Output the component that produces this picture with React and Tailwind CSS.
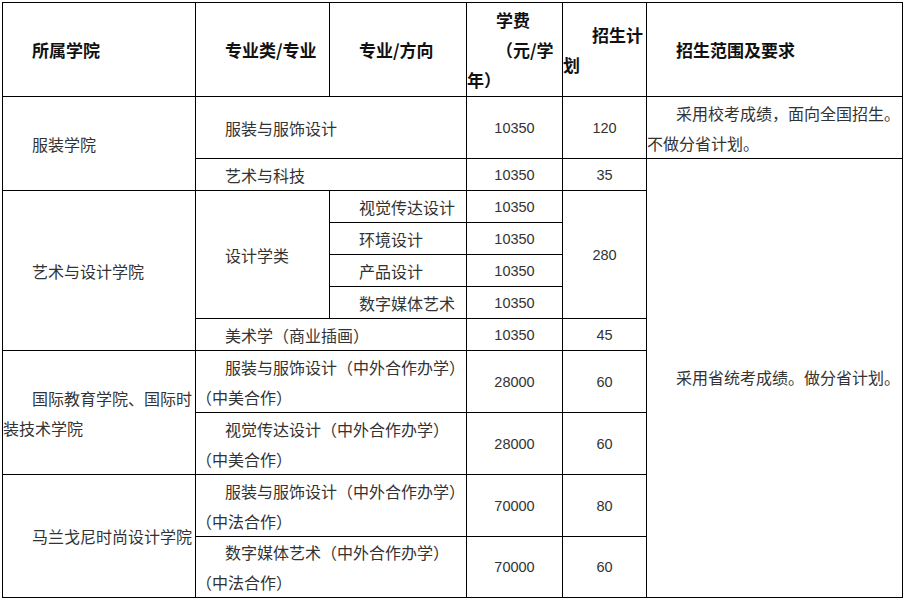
import React from 'react';

// rows of the admissions plan
const cjk = "font-['Noto_Sans_CJK_SC','Noto_Sans',sans-serif]";
const num = "font-['Liberation_Sans',Arial,sans-serif] text-[14.5px] text-center text-[#333]";

const Line = ({ indent = false, children }) => (
  <div className={indent ? 'pl-[29px] whitespace-nowrap' : 'whitespace-nowrap'}>{children}</div>
);

const Td = ({ children, className = '', ...rest }) => (
  <td {...rest} className={`border border-black align-middle p-0 ${className}`}>
    {children}
  </td>
);

const App = () => {
  return (
    <div className={`pl-[2px] pt-[2px] bg-white min-h-[600px] ${cjk}`}>
      <table className="border-collapse table-fixed w-[900px] text-[16px] leading-[30px] text-[#333]">
        <colgroup>
          <col className="w-[193px]" />
          <col className="w-[134px]" />
          <col className="w-[137px]" />
          <col className="w-[96px]" />
          <col className="w-[84px]" />
          <col className="w-[256px]" />
        </colgroup>
        <tbody>
          <tr className="h-[94px] font-bold text-[17px] text-[#111]">
            <Td><Line indent>所属学院</Line></Td>
            <Td><Line indent>专业类/专业</Line></Td>
            <Td><Line indent>专业/方向</Line></Td>
            <Td>
              <Line indent>学费</Line>
              <Line indent>（元/学</Line>
              <Line>年）</Line>
            </Td>
            <Td>
              <Line indent>招生计</Line>
              <Line>划</Line>
            </Td>
            <Td><Line indent>招生范围及要求</Line></Td>
          </tr>

          <tr className="h-[62px]">
            <Td rowSpan={2}><Line indent>服装学院</Line></Td>
            <Td colSpan={2}><Line indent>服装与服饰设计</Line></Td>
            <Td className={num}>10350</Td>
            <Td className={num}>120</Td>
            <Td>
              <Line indent>采用校考成绩，面向全国招生。</Line>
              <Line>不做分省计划。</Line>
            </Td>
          </tr>
          <tr className="h-[32px]">
            <Td colSpan={2}><Line indent>艺术与科技</Line></Td>
            <Td className={num}>10350</Td>
            <Td className={num}>35</Td>
            <Td rowSpan={10}>
              <div className="-mt-[2px]">
                <Line indent>采用省统考成绩。做分省计划。</Line>
              </div>
            </Td>
          </tr>

          <tr className="h-[32px]">
            <Td rowSpan={5}><Line indent>艺术与设计学院</Line></Td>
            <Td rowSpan={4}><Line indent>设计学类</Line></Td>
            <Td><Line indent>视觉传达设计</Line></Td>
            <Td className={num}>10350</Td>
            <Td rowSpan={4} className={num}>280</Td>
          </tr>
          <tr className="h-[32px]">
            <Td><Line indent>环境设计</Line></Td>
            <Td className={num}>10350</Td>
          </tr>
          <tr className="h-[32px]">
            <Td><Line indent>产品设计</Line></Td>
            <Td className={num}>10350</Td>
          </tr>
          <tr className="h-[32px]">
            <Td><Line indent>数字媒体艺术</Line></Td>
            <Td className={num}>10350</Td>
          </tr>
          <tr className="h-[32px]">
            <Td colSpan={2}><Line indent>美术学（商业插画）</Line></Td>
            <Td className={num}>10350</Td>
            <Td className={num}>45</Td>
          </tr>

          <tr className="h-[62px]">
            <Td rowSpan={2}>
              <Line indent>国际教育学院、国际时</Line>
              <Line>装技术学院</Line>
            </Td>
            <Td colSpan={2}>
              <Line indent>服装与服饰设计（中外合作办学）</Line>
              <Line>（中美合作）</Line>
            </Td>
            <Td className={num}>28000</Td>
            <Td className={num}>60</Td>
          </tr>
          <tr className="h-[62px]">
            <Td colSpan={2}>
              <Line indent>视觉传达设计（中外合作办学）</Line>
              <Line>（中美合作）</Line>
            </Td>
            <Td className={num}>28000</Td>
            <Td className={num}>60</Td>
          </tr>

          <tr className="h-[62px]">
            <Td rowSpan={2}><Line indent>马兰戈尼时尚设计学院</Line></Td>
            <Td colSpan={2}>
              <Line indent>服装与服饰设计（中外合作办学）</Line>
              <Line>（中法合作）</Line>
            </Td>
            <Td className={num}>70000</Td>
            <Td className={num}>80</Td>
          </tr>
          <tr className="h-[61px]">
            <Td colSpan={2}>
              <Line indent>数字媒体艺术（中外合作办学）</Line>
              <Line>（中法合作）</Line>
            </Td>
            <Td className={num}>70000</Td>
            <Td className={num}>60</Td>
          </tr>
        </tbody>
      </table>
    </div>
  );
};

export default App;
